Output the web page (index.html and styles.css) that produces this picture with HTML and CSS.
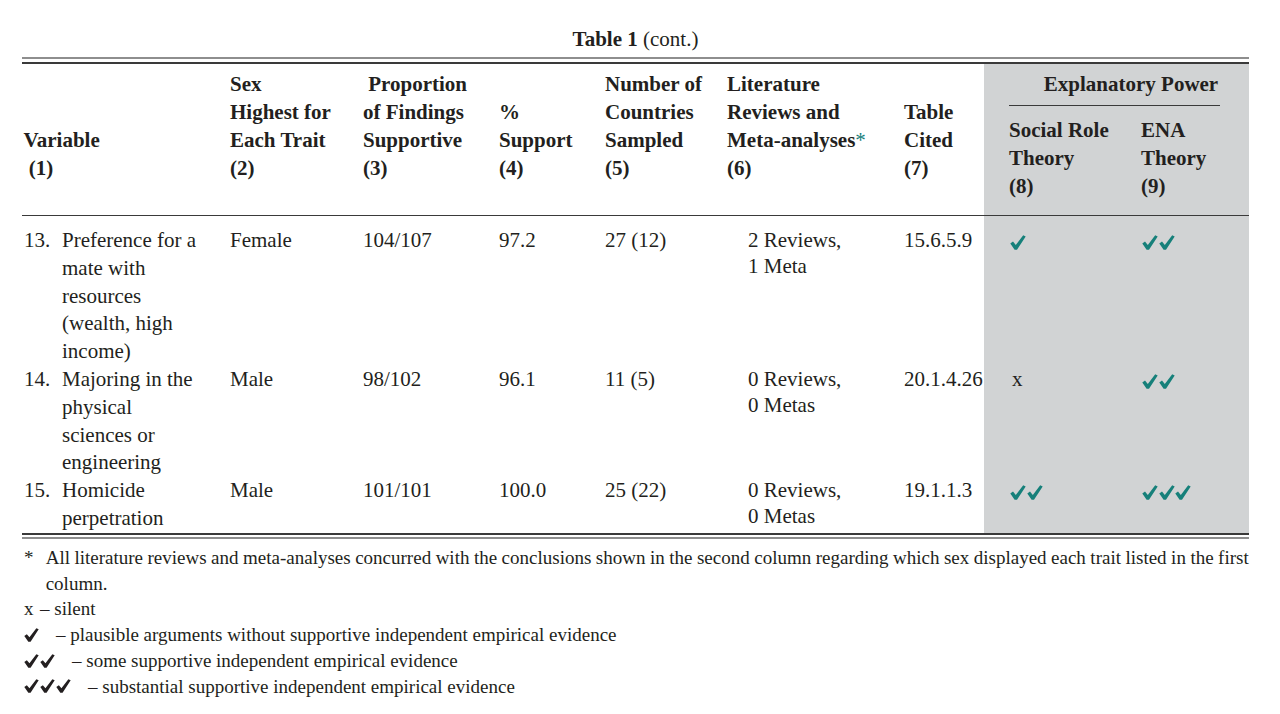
FILE: index.html
```html
<!DOCTYPE html>
<html lang="en">
<head>
<meta charset="utf-8">
<title>Table 1 (cont.)</title>
<link rel="stylesheet" href="styles.css">
</head>
<body>
<div class="page">
  <div class="title"><b>Table 1</b> (cont.)</div>
  <div class="rule-top"></div>
  <table class="data">
    <colgroup>
      <col class="w1"><col class="w2"><col class="w3"><col class="w4"><col class="w5"><col class="w6"><col class="w7"><col class="w8"><col class="w9">
    </colgroup>
    <thead>
      <tr>
        <th rowspan="2" class="h-var">Variable<br>&nbsp;(1)</th>
        <th rowspan="2">Sex<br>Highest for<br>Each Trait<br>(2)</th>
        <th rowspan="2">&nbsp;Proportion<br>of Findings<br>Supportive<br>(3)</th>
        <th rowspan="2">%<br>Support<br>(4)</th>
        <th rowspan="2">Number of<br>Countries<br>Sampled<br>(5)</th>
        <th rowspan="2">Literature<br>Reviews and<br>Meta-analyses<span class="ast">*</span><br>(6)</th>
        <th rowspan="2">Table<br>Cited<br>(7)</th>
        <th colspan="2" class="shade ep"><div class="ep-label">Explanatory Power</div></th>
      </tr>
      <tr>
        <th class="shade sub">Social Role<br>Theory<br>(8)</th>
        <th class="shade sub">ENA<br>Theory<br>(9)</th>
      </tr>
    </thead>
    <tbody>
      <tr>
        <td class="var"><div class="var-wrap"><span class="num">13.</span><span class="vtext">Preference for a mate with resources (wealth, high income)</span></div></td>
        <td>Female</td>
        <td>104/107</td>
        <td>97.2</td>
        <td>27 (12)</td>
        <td class="lit">2 Reviews,<br>1 Meta</td>
        <td class="cite">15.6.5.9</td>
        <td class="shade ev"><svg class="chk" viewBox="0 0 16 15" width="16" height="15"><polygon points="0.3,8.6 3.0,6.6 5.8,10.0 13.2,0.3 15.7,1.4 7.0,14.8 4.6,14.8"/></svg></td>
        <td class="shade ev"><svg class="chk" viewBox="0 0 16 15" width="16" height="15"><polygon points="0.3,8.6 3.0,6.6 5.8,10.0 13.2,0.3 15.7,1.4 7.0,14.8 4.6,14.8"/></svg><svg class="chk" viewBox="0 0 16 15" width="16" height="15"><polygon points="0.3,8.6 3.0,6.6 5.8,10.0 13.2,0.3 15.7,1.4 7.0,14.8 4.6,14.8"/></svg></td>
      </tr>
      <tr>
        <td class="var"><div class="var-wrap"><span class="num">14.</span><span class="vtext">Majoring in the physical sciences or engineering</span></div></td>
        <td>Male</td>
        <td>98/102</td>
        <td>96.1</td>
        <td>11 (5)</td>
        <td class="lit">0 Reviews,<br>0 Metas</td>
        <td class="cite">20.1.4.26</td>
        <td class="shade ev"><span class="silent">x</span></td>
        <td class="shade ev"><svg class="chk" viewBox="0 0 16 15" width="16" height="15"><polygon points="0.3,8.6 3.0,6.6 5.8,10.0 13.2,0.3 15.7,1.4 7.0,14.8 4.6,14.8"/></svg><svg class="chk" viewBox="0 0 16 15" width="16" height="15"><polygon points="0.3,8.6 3.0,6.6 5.8,10.0 13.2,0.3 15.7,1.4 7.0,14.8 4.6,14.8"/></svg></td>
      </tr>
      <tr>
        <td class="var"><div class="var-wrap"><span class="num">15.</span><span class="vtext">Homicide perpetration</span></div></td>
        <td>Male</td>
        <td>101/101</td>
        <td>100.0</td>
        <td>25 (22)</td>
        <td class="lit">0 Reviews,<br>0 Metas</td>
        <td class="cite">19.1.1.3</td>
        <td class="shade ev"><svg class="chk" viewBox="0 0 16 15" width="16" height="15"><polygon points="0.3,8.6 3.0,6.6 5.8,10.0 13.2,0.3 15.7,1.4 7.0,14.8 4.6,14.8"/></svg><svg class="chk" viewBox="0 0 16 15" width="16" height="15"><polygon points="0.3,8.6 3.0,6.6 5.8,10.0 13.2,0.3 15.7,1.4 7.0,14.8 4.6,14.8"/></svg></td>
        <td class="shade ev"><svg class="chk" viewBox="0 0 16 15" width="16" height="15"><polygon points="0.3,8.6 3.0,6.6 5.8,10.0 13.2,0.3 15.7,1.4 7.0,14.8 4.6,14.8"/></svg><svg class="chk" viewBox="0 0 16 15" width="16" height="15"><polygon points="0.3,8.6 3.0,6.6 5.8,10.0 13.2,0.3 15.7,1.4 7.0,14.8 4.6,14.8"/></svg><svg class="chk" viewBox="0 0 16 15" width="16" height="15"><polygon points="0.3,8.6 3.0,6.6 5.8,10.0 13.2,0.3 15.7,1.4 7.0,14.8 4.6,14.8"/></svg></td>
      </tr>
    </tbody>
  </table>
  <div class="rule-bottom"></div>
  <div class="notes">
    <div class="note note-hang"><span class="star">*</span><span class="note-text">All literature reviews and meta-analyses concurred with the conclusions shown in the second column regarding which sex displayed each trait listed in the first column.</span></div>
    <div class="note"><span class="mk mk-x">x</span>– silent</div>
    <div class="note"><span class="mk"><svg class="fchk" viewBox="0 0 16 15" width="15" height="14"><polygon points="0.3,8.6 3.0,6.6 5.8,10.0 13.2,0.3 15.7,1.4 7.0,14.8 4.6,14.8"/></svg></span>– plausible arguments without supportive independent empirical evidence</div>
    <div class="note"><span class="mk"><svg class="fchk" viewBox="0 0 16 15" width="15" height="14"><polygon points="0.3,8.6 3.0,6.6 5.8,10.0 13.2,0.3 15.7,1.4 7.0,14.8 4.6,14.8"/></svg><svg class="fchk" viewBox="0 0 16 15" width="15" height="14"><polygon points="0.3,8.6 3.0,6.6 5.8,10.0 13.2,0.3 15.7,1.4 7.0,14.8 4.6,14.8"/></svg></span>– some supportive independent empirical evidence</div>
    <div class="note"><span class="mk"><svg class="fchk" viewBox="0 0 16 15" width="15" height="14"><polygon points="0.3,8.6 3.0,6.6 5.8,10.0 13.2,0.3 15.7,1.4 7.0,14.8 4.6,14.8"/></svg><svg class="fchk" viewBox="0 0 16 15" width="15" height="14"><polygon points="0.3,8.6 3.0,6.6 5.8,10.0 13.2,0.3 15.7,1.4 7.0,14.8 4.6,14.8"/></svg><svg class="fchk" viewBox="0 0 16 15" width="15" height="14"><polygon points="0.3,8.6 3.0,6.6 5.8,10.0 13.2,0.3 15.7,1.4 7.0,14.8 4.6,14.8"/></svg></span>– substantial supportive independent empirical evidence</div>
  </div>
</div>
</body>
</html>
```

FILE: styles.css
```css
* {
  box-sizing: border-box;
}

body {
  margin: 0;
  background: #ffffff;
  color: #231f20;
  font-family: "Liberation Serif", "Times New Roman", serif;
}

.page {
  width: 1249px;
  padding: 25px 0 0 22px;
}

.title {
  text-align: center;
  font-size: 21px;
  line-height: 28px;
  margin-bottom: 4px;
}

.rule-top {
  height: 7px;
  border-top: 2px solid #8e8e8e;
  border-bottom: 2px solid #3a3a3a;
}

.rule-bottom {
  height: 6px;
  border-top: 2px solid #3a3a3a;
  border-bottom: 2px solid #8e8e8e;
}

.data {
  width: 1227px;
  border-collapse: collapse;
  table-layout: fixed;
  font-size: 21px;
  line-height: 27.8px;
}

.w1 { width: 208px; }
.w2 { width: 133px; }
.w3 { width: 136px; }
.w4 { width: 106px; }
.w5 { width: 122px; }
.w6 { width: 177px; }
.w7 { width: 80px; }
.w8 { width: 132px; }
.w9 { width: 133px; }

.data th {
  font-weight: bold;
  text-align: left;
  vertical-align: bottom;
  line-height: 28px;
  padding: 6px 0 33px 0;
  white-space: nowrap;
}

.data th.h-var {
  padding-left: 1.5px;
}

.data th.ep {
  vertical-align: top;
  padding: 6px 0 0 0;
}

.ep-label {
  margin: 0 29px 0 25px;
  padding: 0 0 7px 33px;
  text-align: center;
  border-bottom: 1.5px solid #3a3a3a;
}

.data th.sub {
  vertical-align: top;
  padding: 10px 0 14px 25px;
}

.ast {
  color: #16807a;
  font-weight: normal;
}

.shade {
  background: #d1d3d4;
}

.data td {
  vertical-align: top;
  padding: 0;
  white-space: nowrap;
}

.data tbody tr:first-child td {
  border-top: 1.5px solid #3a3a3a;
  padding-top: 11px;
}

.data td.var {
  padding-left: 2px;
  padding-right: 28px;
  white-space: normal;
}

.var-wrap {
  display: flex;
}

.num {
  flex: none;
  width: 38px;
}

.vtext {
  flex: 1;
}

.data td.lit {
  padding-left: 21px;
  line-height: 26px;
}

.data td.ev {
  padding-left: 26px;
}

.chk {
  display: inline-block;
  vertical-align: middle;
  margin-right: 0.5px;
  fill: #16807a;
}

.silent {
  padding-left: 2px;
}

.notes {
  width: 1252px;
  margin-top: 6px;
  padding-left: 2px;
  font-size: 19px;
  line-height: 25.8px;
}

.note-hang {
  display: flex;
  word-spacing: -0.25px;
}

.star {
  flex: none;
  width: 21.7px;
}

.note-text {
  flex: 1;
}

.mk {
  display: inline-block;
  margin-right: 16px;
}

.mk-x {
  margin-right: 6.5px;
}

.fchk {
  display: inline-block;
  vertical-align: middle;
  margin-top: -4px;
  margin-right: 1px;
  fill: #231f20;
}
```
